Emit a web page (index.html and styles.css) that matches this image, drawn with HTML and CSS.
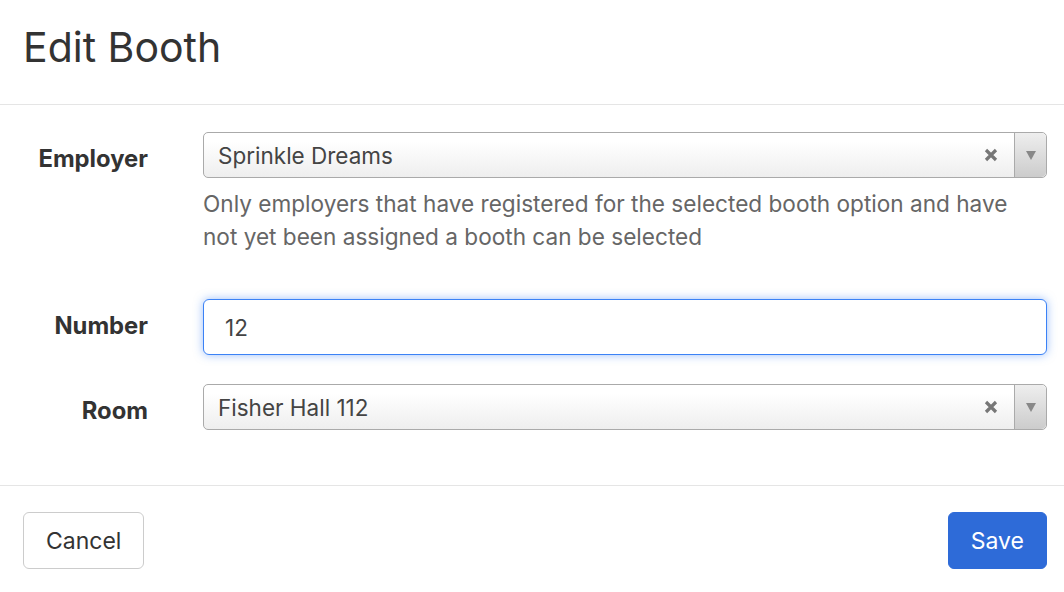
FILE: index.html
```html
<!DOCTYPE html>
<html>
<head>
  <meta charset="UTF-8">
  <title>Edit Booth</title>
  <link rel="stylesheet" href="styles.css">
</head>
<body>
  <div class="modal">
    <div class="modal_header">
      <h1 class="modal_title">Edit Booth</h1>
    </div>

    <form class="modal_body">
      <div class="f_row">
        <label class="f_label">Employer</label>
        <div class="f_field">
          <div class="c_select">
            <span class="c_select_text">Sprinkle Dreams</span>
            <svg class="c_select_clear" width="14" height="14" viewBox="0 0 14 14"><path d="M2 2L12 12M12 2L2 12"/></svg>
            <span class="c_select_arrow"><b></b></span>
          </div>
          <p class="f_help">Only employers that have registered for the selected booth option and have not yet been assigned a booth can be selected</p>
        </div>
      </div>

      <div class="f_row">
        <label class="f_label" for="number">Number</label>
        <div class="f_field">
          <input class="c_input" id="number" type="text" value="12">
        </div>
      </div>

      <div class="f_row">
        <label class="f_label">Room</label>
        <div class="f_field">
          <div class="c_select">
            <span class="c_select_text">Fisher Hall 112</span>
            <svg class="c_select_clear" width="14" height="14" viewBox="0 0 14 14"><path d="M2 2L12 12M12 2L2 12"/></svg>
            <span class="c_select_arrow"><b></b></span>
          </div>
        </div>
      </div>
    </form>

    <div class="modal_footer">
      <button class="btn" type="button">Cancel</button>
      <button class="btn btn_primary" type="button">Save</button>
    </div>
  </div>
</body>
</html>
```

FILE: styles.css
```css
html, body {
  margin: 0;
  background: #fff;
}

body {
  font-family: Inter, "Liberation Sans", sans-serif;
  color: #333;
}

/*header*/
.modal_header {
  padding: 22px 17px 32px 23px;
  border-bottom: 1px solid #e5e5e5;
}

.modal_title {
  margin: 0;
  font-size: 41px;
  font-weight: 400;
  line-height: 50px;
  color: #333;
}

/*form*/
.modal_body {
  padding: 27px 17px 25px 23px;
  border-bottom: 1px solid #e5e5e5;
}

.f_row {
  display: grid;
  grid-template-columns: 125px 1fr;
  column-gap: 55px;
  margin-bottom: 29px;
}

.f_row:last-child {
  margin-bottom: 30px;
}

.f_label {
  text-align: right;
  font-weight: 700;
  font-size: 23.8px;
  line-height: 30px;
  padding-top: 12px;
  color: #333;
}

.f_help {
  margin: 9px 0 17px;
  font-size: 22.6px;
  line-height: 33px;
  color: #666;
}

/*select box*/
.c_select {
  display: flex;
  align-items: center;
  height: 44px;
  border: 1px solid #aaa;
  border-radius: 5px;
  background: linear-gradient(#fff 20%, #eee);
  font-size: 22.5px;
  color: #444;
}

.c_select_text {
  flex: 1;
  padding-left: 14px;
}

.c_select_clear {
  margin-right: 16px;
  fill: none;
  stroke: #777;
  stroke-width: 3.2;
}

.c_select_arrow {
  align-self: stretch;
  width: 31px;
  display: flex;
  align-items: center;
  justify-content: center;
  border-left: 1px solid #aaa;
  border-radius: 0 5px 5px 0;
  background: linear-gradient(#eee, #ccc);
}

.c_select_arrow b {
  width: 0;
  height: 0;
  border-left: 5px solid transparent;
  border-right: 5px solid transparent;
  border-top: 9px solid #888;
}

/*text input*/
.c_input {
  display: block;
  box-sizing: border-box;
  width: 100%;
  height: 56px;
  margin: 0;
  padding: 0 14px 0 21px;
  border: 1px solid #3b82f6;
  border-radius: 6px;
  box-shadow: 0 0 10px rgba(59, 130, 246, 0.5);
  outline: none;
  font-family: inherit;
  font-size: 22.5px;
  color: #444;
}

/*footer*/
.modal_footer {
  display: flex;
  justify-content: space-between;
  padding: 26px 17px 22px 23px;
}

.btn {
  height: 57px;
  padding: 0 22px;
  border: 1px solid #ccc;
  border-radius: 6px;
  background: #fff;
  font-family: inherit;
  font-size: 23px;
  color: #333;
}

.btn_primary {
  border-color: #2e6bd8;
  background: #2e6bd8;
  color: #fff;
}
```
